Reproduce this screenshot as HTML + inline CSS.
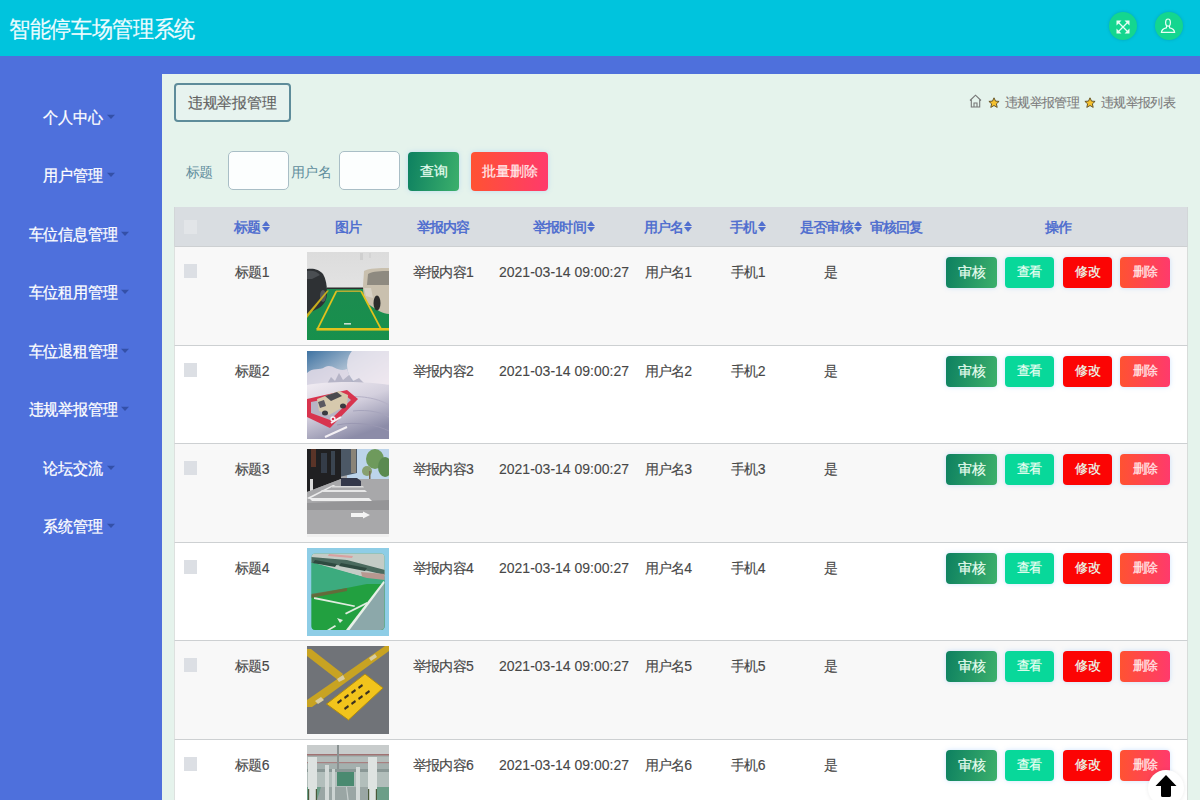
<!DOCTYPE html>
<html><head><meta charset="utf-8">
<style>
*{box-sizing:border-box;margin:0;padding:0}
html,body{width:1200px;height:800px;overflow:hidden;background:#e5f3ec;font-family:"Liberation Sans",sans-serif}
.a{position:absolute;white-space:nowrap}
#hdr{left:0;top:0;width:1200px;height:56px;background:#00c4dd}
#title{left:9px;top:13px;font-size:21px;line-height:30px;color:#eefcff;letter-spacing:-0.35px;-webkit-text-stroke:0.2px #eefcff;transform:scaleY(1.09);transform-origin:0 0}
.hic{top:12px;width:28px;height:28px;border-radius:50%;background:#14d68f;box-shadow:0 0 3px rgba(0,110,120,.35)}
#strip{left:0;top:56px;width:1200px;height:18px;background:#4e70dc}
#side{left:0;top:56px;width:162px;height:744px;background:#4e70dc}
.mi{left:-2px;width:162px;text-align:center;color:#fff;font-size:15px;line-height:20px;-webkit-text-stroke:0.25px #fff;letter-spacing:-0.2px;transform:scaleY(1.06)}
.caret{display:inline-block;width:0;height:0;border-left:4px solid transparent;border-right:4px solid transparent;border-top:4.5px solid #3450a8;vertical-align:middle;margin-left:4px;position:relative;top:-2px;-webkit-text-stroke:0}
#main{left:162px;top:74px;width:1038px;height:726px;background:#e5f3ec}
#tbox{left:174px;top:83px;width:117px;height:39px;border:2px solid #5e8c9a;border-radius:4px;font-size:15px;line-height:35px;color:#636363;padding-left:12px;letter-spacing:-0.3px;-webkit-text-stroke:0.15px #636363;background:#e7f3ef}
.bc{top:95px;font-size:13px;line-height:16px;color:#7c7c7c;-webkit-text-stroke:0.1px #7c7c7c}
.lbl{font-size:14px;line-height:20px;color:#5f8d9c;letter-spacing:-0.6px}
.inp{top:151px;width:61px;height:39px;border:1px solid #a9bec6;border-radius:5px;background:#fcfefe}
.btn{color:#eafff2;text-align:center;border-radius:4px;box-shadow:0 0 5px rgba(120,180,255,.35);-webkit-text-stroke:0.2px currentColor}
.g1{background:linear-gradient(100deg,#0d8060,#3cb06c)}
.g2{background:#08d89a}
.g3{background:#fc0404}
.g4{background:linear-gradient(90deg,#ff5232,#ff3a6c);color:#ffe8ea}
#thead{left:174px;top:207px;width:1014px;height:39px;background:#d9dde1;border-left:1px solid #d2d6d8;border-right:1px solid #d2d6d8}
.th{top:217px;font-size:14px;line-height:20px;color:#5270cf;font-weight:bold;letter-spacing:-0.8px}
.si{display:inline-block;width:8px;height:12px;vertical-align:middle;position:relative;top:-1px;margin-left:1px}
.si:before{content:"";position:absolute;left:0;top:0;border-left:4px solid transparent;border-right:4px solid transparent;border-bottom:5px solid #5270cf}
.si:after{content:"";position:absolute;left:0;top:6px;border-left:4px solid transparent;border-right:4px solid transparent;border-top:5px solid #5270cf}
.row{left:174px;width:1014px;border-top:1px solid #cdd0d2;border-left:1px solid #dde1df;border-right:1px solid #d8dcda}
.cb{width:13.5px;height:14px;background:#dcdfe4}
.td{font-size:14px;line-height:20px;color:#474747;letter-spacing:-0.8px;-webkit-text-stroke:0.15px #474747}
.dt{font-size:14px;line-height:20px;color:#474747;-webkit-text-stroke:0.1px #474747}
.ob{height:30.5px;font-size:14px;line-height:30.5px;letter-spacing:-0.5px}
#totop{left:1148px;top:770px;width:36px;height:36px;border-radius:50%;background:#fff;box-shadow:0 0 4px rgba(0,0,0,.08)}
</style></head><body>
<div id="hdr" class="a">
  <div id="title" class="a">智能停车场管理系统</div>
  <div class="a hic" style="left:1109px">
    <svg class="a" style="left:7px;top:7.5px" width="14" height="14" viewBox="0 0 14 14"><path d="M1.5 1.5L12.5 12.5M12.5 1.5L1.5 12.5" stroke="#e8fff4" stroke-width="1.3"/><path d="M0.5 0.5H5.5L0.5 5.5ZM13.5 0.5V5.5L8.5 0.5ZM13.5 13.5H8.5L13.5 8.5ZM0.5 13.5V8.5L5.5 13.5Z" fill="#e8fff4"/></svg>
  </div>
  <div class="a hic" style="left:1155px">
    <svg class="a" style="left:4.8px;top:6px" width="16" height="16" viewBox="0 0 16 16" fill="none" stroke="#e8fff4" stroke-width="1.2"><path d="M8 1C6.4 1 5.6 2.4 5.6 4.4C5.6 6.6 6.5 8.2 8 8.2C9.5 8.2 10.4 6.6 10.4 4.4C10.4 2.4 9.6 1 8 1Z"/><path d="M6.6 8L6.4 9.8C3.6 10.4 1.6 11.4 1.4 14.4H14.6C14.4 11.4 12.4 10.4 9.6 9.8L9.4 8"/></svg>
  </div>
</div>
<div id="strip" class="a"></div>
<div id="side" class="a">
<div class="a mi" style="top:51.5px">个人中心<span class="caret"></span></div>
<div class="a mi" style="top:110.0px">用户管理<span class="caret"></span></div>
<div class="a mi" style="top:168.5px">车位信息管理<span class="caret"></span></div>
<div class="a mi" style="top:227.0px">车位租用管理<span class="caret"></span></div>
<div class="a mi" style="top:285.5px">车位退租管理<span class="caret"></span></div>
<div class="a mi" style="top:344.0px">违规举报管理<span class="caret"></span></div>
<div class="a mi" style="top:402.5px">论坛交流<span class="caret"></span></div>
<div class="a mi" style="top:461.0px">系统管理<span class="caret"></span></div>
</div>
<div id="main" class="a"></div>
<div id="tbox" class="a">违规举报管理</div>
<svg class="a" style="left:969px;top:94px" width="13" height="14" viewBox="0 0 13 14" fill="none" stroke="#777" stroke-width="1.1"><path d="M1 6.5L6.5 1.2L12 6.5M2.3 5.5V13H10.7V5.5M5 13V9H8V13"/></svg>
<svg class="a" style="left:988px;top:97px" width="12" height="12" viewBox="0 0 12 12"><path d="M6 0.8L7.5 4.1L11.1 4.4L8.4 6.8L9.2 10.4L6 8.5L2.8 10.4L3.6 6.8L0.9 4.4L4.5 4.1Z" fill="#f5c12e" stroke="#5a4a20" stroke-width="0.9"/></svg>
<div class="a bc" style="left:1005px;letter-spacing:-0.7px">违规举报管理</div>
<svg class="a" style="left:1084px;top:97px" width="12" height="12" viewBox="0 0 12 12"><path d="M6 0.8L7.5 4.1L11.1 4.4L8.4 6.8L9.2 10.4L6 8.5L2.8 10.4L3.6 6.8L0.9 4.4L4.5 4.1Z" fill="#f5c12e" stroke="#5a4a20" stroke-width="0.9"/></svg>
<div class="a bc" style="left:1101px;letter-spacing:-0.7px">违规举报列表</div>
<div class="a lbl" style="left:186px;top:162px">标题</div>
<div class="a inp" style="left:228px"></div>
<div class="a lbl" style="left:291px;top:162px">用户名</div>
<div class="a inp" style="left:339px"></div>
<div class="a btn g1" style="left:408px;top:151.5px;width:51px;height:39px;font-size:14px;line-height:39px">查询</div>
<div class="a btn g4" style="left:471px;top:151.5px;width:77px;height:39px;font-size:14px;line-height:39px;letter-spacing:0px">批量删除</div>
<div id="thead" class="a"></div>
<div class="a cb" style="left:183.5px;top:219.5px;background:#e2e5e8"></div>
<div class="a th" style="left:102px;width:300px;text-align:center;top:217px;">标题<span class="si"></span></div>
<div class="a th" style="left:198px;width:300px;text-align:center;top:217px;">图片</div>
<div class="a th" style="left:293px;width:300px;text-align:center;top:217px;">举报内容</div>
<div class="a th" style="left:414px;width:300px;text-align:center;top:217px;">举报时间<span class="si"></span></div>
<div class="a th" style="left:518px;width:300px;text-align:center;top:217px;">用户名<span class="si"></span></div>
<div class="a th" style="left:598px;width:300px;text-align:center;top:217px;">手机<span class="si"></span></div>
<div class="a th" style="left:681px;width:300px;text-align:center;top:217px;">是否审核<span class="si"></span></div>
<div class="a th" style="left:746px;width:300px;text-align:center;top:217px;">审核回复</div>
<div class="a th" style="left:908px;width:300px;text-align:center;top:217px;">操作</div>
<div class="a row" style="top:246px;height:99px;background:#f8f8f8"></div>
<div class="a cb" style="left:183.5px;top:264px"></div>
<div class="a td" style="left:102px;width:300px;text-align:center;top:262px;">标题1</div>
<div class="a" style="left:307px;top:252px;width:82px;height:88px;overflow:hidden"><svg width="82" height="88" viewBox="0 0 82 88">
<defs><linearGradient id="w1" x1="0" y1="0" x2="0" y2="1"><stop offset="0" stop-color="#dcdcdc"/><stop offset="1" stop-color="#ececec"/></linearGradient>
<linearGradient id="g1" x1="0" y1="0" x2="0" y2="1"><stop offset="0" stop-color="#1c8c50"/><stop offset="1" stop-color="#17904c"/></linearGradient></defs>
<rect width="82" height="88" fill="url(#w1)"/>
<rect x="53" y="1" width="3" height="7" fill="#cfcfcf"/><rect x="62" y="1" width="2" height="5" fill="#d4d4d4"/>
<rect x="0" y="36" width="82" height="52" fill="url(#g1)"/>
<rect x="20" y="35.5" width="42" height="1.5" fill="#2a2e2c"/>
<path d="M0 17C6 16 12 17 16 22C19 27 20 34 20 40C20 47 18 52 12 56L0 62Z" fill="#2e3134"/>
<path d="M0 19C5 18 10 19 13 23L5 27L0 27Z" fill="#4a4e52"/>
<ellipse cx="16" cy="44" rx="3" ry="6" fill="#55585a"/>
<path d="M57 19C62 16 72 16 82 16V62C76 62 70 58 64 54C58 50 56 44 56 34Z" fill="#c9c0ae"/>
<path d="M61 22C66 19 74 19 82 19V33H60Z" fill="#8e8a80"/>
<path d="M57 36L64 36L66 46L59 44Z" fill="#d8d2c6"/>
<ellipse cx="70" cy="51" rx="3.5" ry="7.5" fill="#2c2c2c"/>
<path d="M28.5 39H30.5L11.5 77H9.5Z" fill="#e3c21c"/>
<path d="M53 39H55L75 77H73Z" fill="#e3c21c"/>
<rect x="9.5" y="76" width="72.5" height="2.6" fill="#e3c21c"/>
<rect x="29" y="38.5" width="25" height="1.4" fill="#c8b030"/>
<path d="M0 62L20 38.5H22L0 66Z" fill="#c8ac1c"/>
<rect x="37" y="71" width="7" height="1.6" fill="#c8e0d0"/>
</svg></div>
<div class="a td" style="left:293px;width:300px;text-align:center;top:262px;">举报内容1</div>
<div class="a dt" style="left:414px;width:300px;text-align:center;top:262px;">2021-03-14 09:00:27</div>
<div class="a td" style="left:518px;width:300px;text-align:center;top:262px;">用户名1</div>
<div class="a td" style="left:598px;width:300px;text-align:center;top:262px;">手机1</div>
<div class="a td" style="left:681px;width:300px;text-align:center;top:262px;">是</div>
<div class="a btn g1 ob" style="left:946px;top:257px;width:51px">审核</div>
<div class="a btn g2 ob" style="left:1005px;top:257px;width:49px;font-size:12.5px;letter-spacing:-0.2px">查看</div>
<div class="a btn g3 ob" style="left:1063px;top:257px;width:49px;font-size:13px">修改</div>
<div class="a btn g4 ob" style="left:1120px;top:257px;width:50px;font-size:13px">删除</div>
<div class="a row" style="top:345px;height:98px;background:#ffffff"></div>
<div class="a cb" style="left:183.5px;top:363px"></div>
<div class="a td" style="left:102px;width:300px;text-align:center;top:361px;">标题2</div>
<div class="a" style="left:307px;top:351px;width:82px;height:88px;overflow:hidden"><svg width="82" height="88" viewBox="0 0 82 88">
<defs><linearGradient id="s2" x1="0" y1="0" x2="0.6" y2="1"><stop offset="0" stop-color="#3f73a2"/><stop offset="0.35" stop-color="#a8bcd0"/><stop offset="0.7" stop-color="#e8e2ec"/></linearGradient>
<linearGradient id="gr2" x1="0" y1="0" x2="0.5" y2="1"><stop offset="0" stop-color="#f2edf3"/><stop offset="0.5" stop-color="#d4d0de"/><stop offset="1" stop-color="#8c8ca8"/></linearGradient></defs>
<rect width="82" height="88" fill="url(#s2)"/>
<ellipse cx="66" cy="14" rx="26" ry="24" fill="#f0e8f0" opacity="0.8"/>
<path d="M0 22C6 16 12 20 18 16C26 12 30 22 40 18L46 34H0Z" fill="#e4dce8" opacity="0.85"/>
<path d="M20 33L24 26L28 30L32 22L36 29L42 24L46 30L52 27L58 33Z" fill="#a8a8bc" opacity="0.75"/>
<path d="M0 34C20 30 60 30 82 34V88H0Z" fill="url(#gr2)"/>
<path d="M40 46C60 44 76 50 82 54" fill="none" stroke="#b4b0c6" stroke-width="1"/>
<path d="M46 60C62 58 76 62 82 66" fill="none" stroke="#a6a4bc" stroke-width="1"/>
<path d="M30 74C50 70 70 74 82 80" fill="none" stroke="#9a98b2" stroke-width="1"/>
<path d="M0 48L40 39L51 48L23 77L0 66Z" fill="#d8344e"/>
<path d="M4 51L38 44L44 49L23 69L4 62Z" fill="#b8b4c4"/>
<path d="M10 48L32 40L41 44L40 54L22 64L12 60Z" fill="#d6c9ad"/>
<path d="M18 45L30 41L35 45L24 50Z" fill="#4a4a50"/>
<path d="M11 51L17 49L19 55L13 57Z" fill="#5a5860"/>
<ellipse cx="36" cy="55" rx="3" ry="2.5" fill="#3a3a40"/>
<ellipse cx="18" cy="62" rx="3" ry="2.5" fill="#3a3a40"/>
<path d="M24 72L34 66" stroke="#f4f0f4" stroke-width="2"/>
<circle cx="26" cy="68" r="2" fill="none" stroke="#f4f0f4" stroke-width="1.4"/>
<path d="M18 86L40 76" stroke="#f4f0f4" stroke-width="2"/>
</svg></div>
<div class="a td" style="left:293px;width:300px;text-align:center;top:361px;">举报内容2</div>
<div class="a dt" style="left:414px;width:300px;text-align:center;top:361px;">2021-03-14 09:00:27</div>
<div class="a td" style="left:518px;width:300px;text-align:center;top:361px;">用户名2</div>
<div class="a td" style="left:598px;width:300px;text-align:center;top:361px;">手机2</div>
<div class="a td" style="left:681px;width:300px;text-align:center;top:361px;">是</div>
<div class="a btn g1 ob" style="left:946px;top:356px;width:51px">审核</div>
<div class="a btn g2 ob" style="left:1005px;top:356px;width:49px;font-size:12.5px;letter-spacing:-0.2px">查看</div>
<div class="a btn g3 ob" style="left:1063px;top:356px;width:49px;font-size:13px">修改</div>
<div class="a btn g4 ob" style="left:1120px;top:356px;width:50px;font-size:13px">删除</div>
<div class="a row" style="top:443px;height:99px;background:#f8f8f8"></div>
<div class="a cb" style="left:183.5px;top:461px"></div>
<div class="a td" style="left:102px;width:300px;text-align:center;top:459px;">标题3</div>
<div class="a" style="left:307px;top:449px;width:82px;height:88px;overflow:hidden"><svg width="82" height="88" viewBox="0 0 82 88">
<rect width="82" height="88" fill="#a6a6a8"/>
<rect x="40" y="0" width="42" height="30" fill="#bcd4ea"/>
<ellipse cx="68" cy="10" rx="9" ry="10" fill="#6e9a5c"/><ellipse cx="78" cy="18" rx="7" ry="10" fill="#5a8a50"/><ellipse cx="60" cy="22" rx="5" ry="5" fill="#88a070"/><rect x="62" y="22" width="1.5" height="8" fill="#7a6a50"/>
<path d="M32 0H50V24L32 28Z" fill="#4c5866"/><rect x="44" y="0" width="5" height="24" fill="#8a8478"/>
<path d="M0 0H34V30L0 43Z" fill="#202022"/>
<rect x="4" y="0" width="5" height="18" fill="#5a3428"/>
<rect x="14" y="4" width="6" height="20" fill="#343c48"/>
<rect x="24" y="2" width="4" height="24" fill="#3a4450"/>
<rect x="3" y="30" width="3" height="12" fill="#dadada"/>
<path d="M0 43L34 30H82V88H0Z" fill="#a8a8aa"/>
<path d="M34 29H50L54 32V37H34Z" fill="#34384a"/>
<path d="M0 54L82 51V61L0 61Z" fill="#959597"/>
<path d="M0 49L26 36H28.5L2 50Z" fill="#ececec"/>
<path d="M2 49H62L65 52H5Z" fill="#eeeeee"/>
<path d="M14 41H58L60 43H16Z" fill="#e6e6e6"/>
<path d="M24 37H56L57 38.5H25Z" fill="#dadada"/>
<path d="M44 64H56V62.5L63 66L56 69.5V68H44Z" fill="#f4f4f4"/>
<path d="M0 85H82V88H0Z" fill="#f0f0f0"/>
</svg></div>
<div class="a td" style="left:293px;width:300px;text-align:center;top:459px;">举报内容3</div>
<div class="a dt" style="left:414px;width:300px;text-align:center;top:459px;">2021-03-14 09:00:27</div>
<div class="a td" style="left:518px;width:300px;text-align:center;top:459px;">用户名3</div>
<div class="a td" style="left:598px;width:300px;text-align:center;top:459px;">手机3</div>
<div class="a td" style="left:681px;width:300px;text-align:center;top:459px;">是</div>
<div class="a btn g1 ob" style="left:946px;top:454px;width:51px">审核</div>
<div class="a btn g2 ob" style="left:1005px;top:454px;width:49px;font-size:12.5px;letter-spacing:-0.2px">查看</div>
<div class="a btn g3 ob" style="left:1063px;top:454px;width:49px;font-size:13px">修改</div>
<div class="a btn g4 ob" style="left:1120px;top:454px;width:50px;font-size:13px">删除</div>
<div class="a row" style="top:542px;height:98px;background:#ffffff"></div>
<div class="a cb" style="left:183.5px;top:560px"></div>
<div class="a td" style="left:102px;width:300px;text-align:center;top:558px;">标题4</div>
<div class="a" style="left:307px;top:548px;width:82px;height:88px;overflow:hidden"><svg width="82" height="88" viewBox="0 0 82 88">
<defs><clipPath id="cl4"><rect x="4.5" y="5.5" width="73" height="76.5" rx="4"/></clipPath></defs>
<rect width="82" height="88" fill="#8ecde6"/>
<g clip-path="url(#cl4)">
<rect x="0" y="0" width="82" height="88" fill="#3aa87a"/>
<path d="M0 0H82V28L60 30L4 14Z" fill="#c4ccc6"/>
<path d="M4 9L40 12L78 22V27L40 18L4 15Z" fill="#4a6a5e"/>
<path d="M8 12L30 16L28 19L6 15Z" fill="#2e4a40"/>
<path d="M34 15L60 20L58 23L32 18Z" fill="#2e4a40"/>
<path d="M22 6L46 8L45 10L21 8Z" fill="#d8a0a0"/>
<path d="M54 24L78 26V32L56 32Z" fill="#b89890"/>
<path d="M4 15L60 30L78 32V36L60 36L4 47Z" fill="#3cab7e"/>
<path d="M4 47L60 36H78V88H0Z" fill="#22a040"/>
<path d="M41 82L78 33V88H36Z" fill="#8ca8aa"/>
<path d="M39 82L76.5 33L78 34.5L42.5 82Z" fill="#e8f0e8"/>
<path d="M7 49L48 57.5L47.5 59L7 51Z" fill="#e0ecdf"/>
<path d="M38 65L60 54L61 55.5L39 66.5Z" fill="#e0ecdf"/>
<path d="M20 82L28 77L29 78.5L23 82Z" fill="#e0ecdf"/>
<path d="M30 70L36 72L33 75Z" fill="#e0ecdf"/>
<path d="M4 46L40 40V43L4 50Z" fill="#7a5a38" opacity="0.75"/>
</g>
</svg></div>
<div class="a td" style="left:293px;width:300px;text-align:center;top:558px;">举报内容4</div>
<div class="a dt" style="left:414px;width:300px;text-align:center;top:558px;">2021-03-14 09:00:27</div>
<div class="a td" style="left:518px;width:300px;text-align:center;top:558px;">用户名4</div>
<div class="a td" style="left:598px;width:300px;text-align:center;top:558px;">手机4</div>
<div class="a td" style="left:681px;width:300px;text-align:center;top:558px;">是</div>
<div class="a btn g1 ob" style="left:946px;top:553px;width:51px">审核</div>
<div class="a btn g2 ob" style="left:1005px;top:553px;width:49px;font-size:12.5px;letter-spacing:-0.2px">查看</div>
<div class="a btn g3 ob" style="left:1063px;top:553px;width:49px;font-size:13px">修改</div>
<div class="a btn g4 ob" style="left:1120px;top:553px;width:50px;font-size:13px">删除</div>
<div class="a row" style="top:640px;height:99px;background:#f8f8f8"></div>
<div class="a cb" style="left:183.5px;top:658px"></div>
<div class="a td" style="left:102px;width:300px;text-align:center;top:656px;">标题5</div>
<div class="a" style="left:307px;top:646px;width:82px;height:88px;overflow:hidden"><svg width="82" height="88" viewBox="0 0 82 88">
<rect width="82" height="88" fill="#707378"/>
<path d="M0 3L4 3L36 28L31 34L0 10Z" fill="#c8a322"/>
<path d="M0 54L78 0H82V5L5 61H0Z" fill="#c8a322"/>
<path d="M8 55L14 51L17 54L11 58Z" fill="#d8cca0"/>
<path d="M62 12L68 8L70 11L64 15Z" fill="#d8cca0"/>
<path d="M30 33L36 29L38 33L32 36Z" fill="#d8cca0"/>
<path d="M19.5 58L58 28L76 42L41.5 74Z" fill="#f2c41c" stroke="#b08c10" stroke-width="1"/>
<g fill="#3a3020">
<path d="M30 56L34 53L35 55L31 58Z"/><path d="M37 51L41 48L42 50L38 53Z"/><path d="M44 46L48 43L49 45L45 48Z"/><path d="M51 41L55 38L56 40L52 43Z"/>
<path d="M37 62L41 59L42 61L38 64Z"/><path d="M44 57L48 54L49 56L45 59Z"/><path d="M51 52L55 49L56 51L52 54Z"/><path d="M58 47L62 44L63 46L59 49Z"/>
</g>
</svg></div>
<div class="a td" style="left:293px;width:300px;text-align:center;top:656px;">举报内容5</div>
<div class="a dt" style="left:414px;width:300px;text-align:center;top:656px;">2021-03-14 09:00:27</div>
<div class="a td" style="left:518px;width:300px;text-align:center;top:656px;">用户名5</div>
<div class="a td" style="left:598px;width:300px;text-align:center;top:656px;">手机5</div>
<div class="a td" style="left:681px;width:300px;text-align:center;top:656px;">是</div>
<div class="a btn g1 ob" style="left:946px;top:651px;width:51px">审核</div>
<div class="a btn g2 ob" style="left:1005px;top:651px;width:49px;font-size:12.5px;letter-spacing:-0.2px">查看</div>
<div class="a btn g3 ob" style="left:1063px;top:651px;width:49px;font-size:13px">修改</div>
<div class="a btn g4 ob" style="left:1120px;top:651px;width:50px;font-size:13px">删除</div>
<div class="a row" style="top:739px;height:98px;background:#ffffff"></div>
<div class="a cb" style="left:183.5px;top:757px"></div>
<div class="a td" style="left:102px;width:300px;text-align:center;top:755px;">标题6</div>
<div class="a" style="left:307px;top:745px;width:82px;height:88px;overflow:hidden"><svg width="82" height="88" viewBox="0 0 82 88">
<rect width="82" height="88" fill="#a4b0ae"/>
<rect x="0" y="0" width="82" height="10" fill="#c8cccc"/>
<rect x="0" y="9" width="82" height="1.5" fill="#a07272"/>
<rect x="0" y="12" width="82" height="6" fill="#b4bcba"/>
<rect x="0" y="17" width="82" height="1.2" fill="#a88080"/>
<rect x="30" y="0" width="2" height="28" fill="#8a9292"/>
<rect x="0" y="24" width="82" height="3" fill="#8a9896"/>
<rect x="0" y="27" width="82" height="17" fill="#b2bebb"/>
<rect x="30" y="27" width="17" height="14" fill="#4a8a70"/>
<rect x="0" y="42" width="82" height="46" fill="#6c9e88"/>
<path d="M14 42H66L82 88H0Z" fill="#9aa6a4"/>
<path d="M40 42L46 88H44L39 42Z" fill="#c8d0ce"/>
<rect x="1" y="12" width="9" height="76" fill="#dde2e0"/>
<rect x="18" y="20" width="4" height="68" fill="#d4dad8"/>
<rect x="25" y="24" width="3" height="40" fill="#ccd4d2"/>
<rect x="49" y="22" width="4" height="66" fill="#d4dad8"/>
<rect x="61" y="12" width="9" height="76" fill="#dee3e1"/>
<rect x="1" y="44" width="1.2" height="12" fill="#4a5a3a"/><rect x="8.8" y="44" width="1.2" height="12" fill="#4a5a3a"/>
<rect x="61" y="44" width="1.2" height="12" fill="#4a5a3a"/><rect x="68.8" y="44" width="1.2" height="12" fill="#4a5a3a"/>
</svg></div>
<div class="a td" style="left:293px;width:300px;text-align:center;top:755px;">举报内容6</div>
<div class="a dt" style="left:414px;width:300px;text-align:center;top:755px;">2021-03-14 09:00:27</div>
<div class="a td" style="left:518px;width:300px;text-align:center;top:755px;">用户名6</div>
<div class="a td" style="left:598px;width:300px;text-align:center;top:755px;">手机6</div>
<div class="a td" style="left:681px;width:300px;text-align:center;top:755px;">是</div>
<div class="a btn g1 ob" style="left:946px;top:750px;width:51px">审核</div>
<div class="a btn g2 ob" style="left:1005px;top:750px;width:49px;font-size:12.5px;letter-spacing:-0.2px">查看</div>
<div class="a btn g3 ob" style="left:1063px;top:750px;width:49px;font-size:13px">修改</div>
<div class="a btn g4 ob" style="left:1120px;top:750px;width:50px;font-size:13px">删除</div>
<div id="totop" class="a"><svg class="a" style="left:7px;top:5px" width="22" height="23" viewBox="0 0 22 23"><path d="M11 0L21.5 11H16V20.5Q16 22 14.5 22H7.5Q6 22 6 20.5V11H0.5Z" fill="#000"/></svg></div>
</body></html>
